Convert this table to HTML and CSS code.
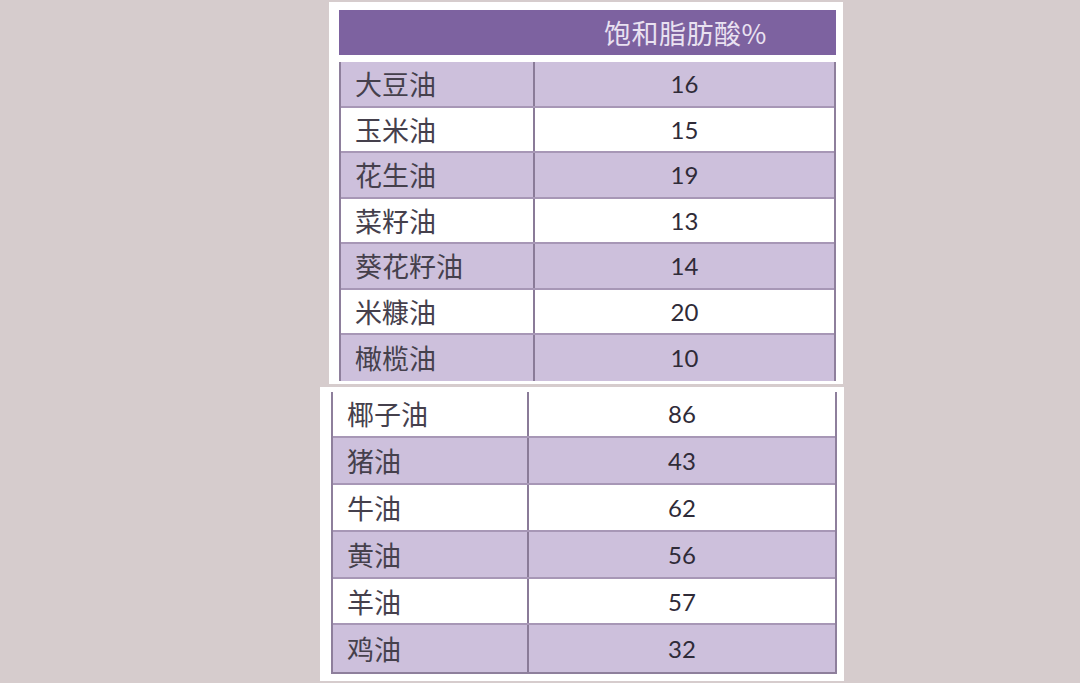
FILE: index.html
```html
<!DOCTYPE html>
<html lang="zh">
<head>
<meta charset="utf-8">
<title>饱和脂肪酸</title>
<link rel="stylesheet" href="styles.css">
</head>
<body>
<div class="page">
  <div class="panel panel-top">
    <div class="head">
      <div class="head-l"></div>
      <div class="head-r">饱和脂肪酸%</div>
    </div>
    <div class="tbl">
      <div class="row odd"><div class="name">大豆油</div><div class="val">16</div></div>
      <div class="row"><div class="name">玉米油</div><div class="val">15</div></div>
      <div class="row odd"><div class="name">花生油</div><div class="val">19</div></div>
      <div class="row"><div class="name">菜籽油</div><div class="val">13</div></div>
      <div class="row odd"><div class="name">葵花籽油</div><div class="val">14</div></div>
      <div class="row"><div class="name">米糠油</div><div class="val">20</div></div>
      <div class="row odd"><div class="name">橄榄油</div><div class="val">10</div></div>
    </div>
  </div>
  <div class="panel panel-bottom">
    <div class="tbl tbl-b">
      <div class="row"><div class="name">椰子油</div><div class="val">86</div></div>
      <div class="row odd"><div class="name">猪油</div><div class="val">43</div></div>
      <div class="row"><div class="name">牛油</div><div class="val">62</div></div>
      <div class="row odd"><div class="name">黄油</div><div class="val">56</div></div>
      <div class="row"><div class="name">羊油</div><div class="val">57</div></div>
      <div class="row odd"><div class="name">鸡油</div><div class="val">32</div></div>
    </div>
  </div>
</div>
</body>
</html>
```

FILE: styles.css
```css
html, body {
  margin: 0;
  padding: 0;
  background: #d6cccd;
  width: 1080px;
  height: 683px;
  overflow: hidden;
}

.page {
  display: flex;
  flex-direction: column;
  padding-top: 2px;
}

.panel {
  background: #ffffff;
  box-sizing: border-box;
}

.panel-top {
  margin-left: 329px;
  width: 514px;
  padding: 8px 7px 3px 10px;
}

.panel-bottom {
  margin-left: 320px;
  margin-top: 3px;
  width: 524px;
  padding: 5px 7px 7px 11px;
}

.head {
  display: grid;
  grid-template-columns: 196px 1fr;
  height: 45px;
  background: #7d62a0;
  margin-bottom: 7px;
}

.head-r {
  display: flex;
  align-items: center;
  justify-content: center;
  color: #e9e1f1;
  font-family: "Noto Sans CJK SC", sans-serif;
  font-size: 27px;
  letter-spacing: 0.5px;
}

.tbl {
  border-left: 2px solid #8e7f9c;
  border-right: 2px solid #8e7f9c;
}

.tbl-b {
  border-bottom: 2px solid #8e7f9c;
}

.row {
  display: grid;
  grid-template-columns: 194px 1fr;
  height: 45.5px;
  box-sizing: border-box;
  border-bottom: 2px solid #a797b6;
  background: #ffffff;
}

.row:last-child {
  border-bottom: none;
}

.tbl-b .row {
  height: 46.8px;
  grid-template-columns: 196px 1fr;
}

.row.odd {
  background: #cdc0dc;
}

.name {
  display: flex;
  align-items: center;
  padding-left: 14px;
  border-right: 2px solid #8a7b98;
  color: #45404c;
  font-family: "Noto Sans CJK SC", sans-serif;
  font-weight: 400;
  font-size: 27px;
}

.val {
  display: flex;
  align-items: center;
  justify-content: center;
  color: #2f2b38;
  font-family: Lato, "Open Sans", sans-serif;
  font-size: 24px;
}
```
